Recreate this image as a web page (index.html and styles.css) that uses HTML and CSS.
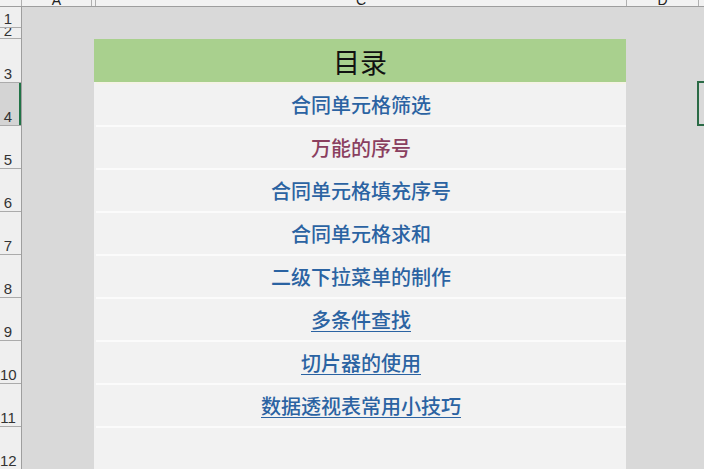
FILE: index.html
```html
<!DOCTYPE html>
<html lang="zh">
<head>
<meta charset="utf-8">
<link rel="stylesheet" href="styles.css">
</head>
<body>
<div class="app">
  <div class="colhead">
    <div class="corner"></div>
    <div class="col col-a"><span>A</span></div>
    <div class="col col-b"></div>
    <div class="col col-c"><span>C</span></div>
    <div class="col col-d"><span>D</span></div>
    <div class="col col-e"></div>
  </div>
  <div class="body">
    <div class="rowheads">
      <div class="rh r1"><span>1</span></div>
      <div class="rh r2"><span>2</span></div>
      <div class="rh r3"><span>3</span></div>
      <div class="rh r-sel"><span>4</span></div>
      <div class="rh"><span>5</span></div>
      <div class="rh"><span>6</span></div>
      <div class="rh"><span>7</span></div>
      <div class="rh"><span>8</span></div>
      <div class="rh"><span>9</span></div>
      <div class="rh"><span>10</span></div>
      <div class="rh"><span>11</span></div>
      <div class="rh r-last"><span>12</span></div>
    </div>
    <div class="sheet">
      <div class="toc">
        <div class="toc-title">目录</div>
        <div class="toc-row first"><div class="cell link">合同单元格筛选</div></div>
        <div class="toc-row"><div class="cell visited">万能的序号</div></div>
        <div class="toc-row"><div class="cell link">合同单元格填充序号</div></div>
        <div class="toc-row"><div class="cell link">合同单元格求和</div></div>
        <div class="toc-row"><div class="cell link">二级下拉菜单的制作</div></div>
        <div class="toc-row"><div class="cell link u">多条件查找</div></div>
        <div class="toc-row"><div class="cell link u">切片器的使用</div></div>
        <div class="toc-row"><div class="cell link u">数据透视表常用小技巧</div></div>
        <div class="toc-row last"><div class="cell"></div></div>
      </div>
      <div class="active-cell"></div>
    </div>
  </div>
</div>
</body>
</html>
```
FILE: styles.css
```css
* { box-sizing: border-box; }
html, body { margin: 0; padding: 0; }
body {
  width: 704px;
  height: 469px;
  overflow: hidden;
  background: #d9d9d9;
  font-family: "Noto Sans CJK SC", "Noto Sans", sans-serif;
}
.app { width: 704px; height: 469px; display: flex; flex-direction: column; }

.colhead {
  height: 7px;
  display: flex;
  background: #f2f2f2;
  border-bottom: 1px solid #9e9e9e;
  overflow: hidden;
  font-family: "Liberation Sans", Arial, sans-serif;
  font-size: 14px;
  color: #222;
}
.corner { width: 22px; border-right: 1px solid #b0b0b0; }
.col { height: 6px; overflow: hidden; text-align: center; border-right: 1px solid #b0b0b0; }
.col span { display: block; margin-top: -7px; line-height: 14px; }
.col-a { width: 70px; }
.col-b { width: 4px; }
.col-c { width: 531px; }
.col-d { width: 72px; }
.col-e { flex: 1; border-right: none; }

.body { flex: 1; display: flex; position: relative; min-height: 0; }

.rowheads {
  width: 22px;
  background: #efefef;
  border-right: 1px solid #9e9e9e;
  display: flex;
  flex-direction: column;
  font-family: "Liberation Sans", Arial, sans-serif;
  font-size: 15px;
  color: #333;
}
.rh {
  height: 43px;
  border-bottom: 1px solid #ababab;
  display: flex;
  align-items: flex-end;
  overflow: hidden;
  flex-shrink: 0;
}
.rh span { width: 16px; text-align: center; line-height: 15px; padding-bottom: 1px; }
.rh.r1 { height: 21px; }
.rh.r2 { height: 11px; }
.rh.r2 span { padding-bottom: 0; }
.rh.r3 { height: 44px; }
.rh.r-sel {
  background: #d4d4d4;
  box-shadow: inset -2px 0 0 #217346;
}
.rh.r-last { flex: 1; border-bottom: none; }

.sheet {
  flex: 1;
  padding: 32px 0 0 72px;
  position: relative;
  overflow: hidden;
}
.toc {
  width: 532px;
  display: flex;
  flex-direction: column;
}
.toc-title {
  height: 43px;
  background: #a9d08e;
  display: flex;
  align-items: center;
  justify-content: center;
  font-size: 27px;
  font-weight: 400;
  color: #111;
  padding-top: 2px;
}
.toc-row {
  height: 43px;
  background: #f2f2f2;
  padding-left: 2px;
}
.toc-row.last { height: 60px; }
.cell {
  height: 100%;
  border-top: 2px solid #fbfbfb;
  display: flex;
  align-items: center;
  justify-content: center;
  font-size: 20px;
  font-weight: 500;
}
.toc-row.first .cell { border-top-color: #f5f3e6; }
.link { color: #2b63a2; }
.visited { color: #8a3f5f; }
.u { text-decoration: underline; text-underline-offset: 3px; text-decoration-thickness: 1px; }

.active-cell {
  position: absolute;
  left: 675px;
  top: 74px;
  width: 20px;
  height: 45px;
  border: 2px solid #2b6b46;
}
```
